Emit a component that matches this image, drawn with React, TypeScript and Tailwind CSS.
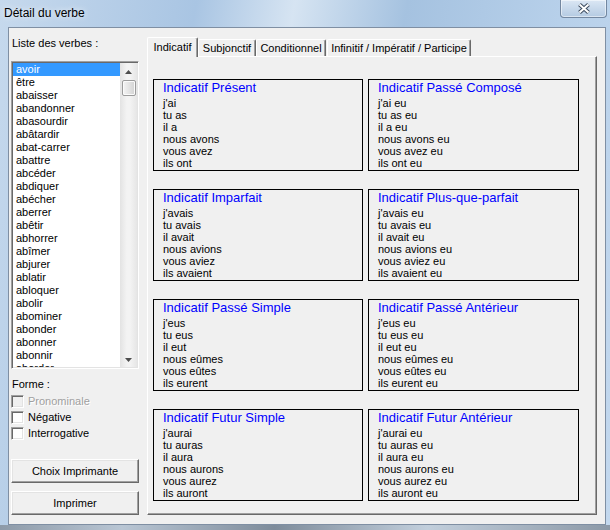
import React from 'react';

const verbs = [
  'avoir', 'être', 'abaisser', 'abandonner', 'abasourdir', 'abâtardir', 'abat-carrer', 'abattre',
  'abcéder', 'abdiquer', 'abécher', 'aberrer', 'abêtir', 'abhorrer', 'abîmer', 'abjurer',
  'ablatir', 'abloquer', 'abolir', 'abominer', 'abonder', 'abonner', 'abonnir', 'aborder',
];

const tenses = [
  { title: 'Indicatif Présent', lines: ["j'ai", 'tu as', 'il a', 'nous avons', 'vous avez', 'ils ont'] },
  { title: 'Indicatif Passé Composé', lines: ["j'ai eu", 'tu as eu', 'il a eu', 'nous avons eu', 'vous avez eu', 'ils ont eu'] },
  { title: 'Indicatif Imparfait', lines: ["j'avais", 'tu avais', 'il avait', 'nous avions', 'vous aviez', 'ils avaient'] },
  { title: 'Indicatif Plus-que-parfait', lines: ["j'avais eu", 'tu avais eu', 'il avait eu', 'nous avions eu', 'vous aviez eu', 'ils avaient eu'] },
  { title: 'Indicatif Passé Simple', lines: ["j'eus", 'tu eus', 'il eut', 'nous eûmes', 'vous eûtes', 'ils eurent'] },
  { title: 'Indicatif Passé Antérieur', lines: ["j'eus eu", 'tu eus eu', 'il eut eu', 'nous eûmes eu', 'vous eûtes eu', 'ils eurent eu'] },
  { title: 'Indicatif Futur Simple', lines: ["j'aurai", 'tu auras', 'il aura', 'nous aurons', 'vous aurez', 'ils auront'] },
  { title: 'Indicatif Futur Antérieur', lines: ["j'aurai eu", 'tu auras eu', 'il aura eu', 'nous aurons eu', 'vous aurez eu', 'ils auront eu'] },
];

const tabs = [
  { label: 'Indicatif', w: 'w-[51px]', active: true },
  { label: 'Subjonctif', w: 'w-[58px]' },
  { label: 'Conditionnel', w: 'w-[70px]' },
  { label: 'Infinitif / Impératif / Participe', w: 'w-[144px] ml-[1px]' },
];

function Checkbox({ label, disabled }: { label: string; disabled?: boolean }) {
  return (
    <div className="flex items-center h-[13px]">
      <div
        className={`w-[13px] h-[13px] border border-t-[#a0a0a0] border-l-[#a0a0a0] border-r-white border-b-white shadow-[inset_1px_1px_0_#696969,inset_-1px_-1px_0_#e3e3e3] ${disabled ? 'bg-[#f0f0f0]' : 'bg-white'}`}
      />
      <span
        className={`ml-[4px] text-[11px] leading-[13px] ${disabled ? 'text-[#a0a0a0] [text-shadow:1px_1px_0_#fff]' : 'text-black'}`}
      >
        {label}
      </span>
    </div>
  );
}

function Button({ label, className = '' }: { label: string; className?: string }) {
  return (
    <div
      className={`w-[128px] h-[24px] flex items-center justify-center bg-[#f0f0f0] border border-t-white border-l-white border-r-[#696969] border-b-[#696969] shadow-[inset_-1px_-1px_0_#a0a0a0,inset_1px_1px_0_#e3e3e3] text-[11px] text-black ${className}`}
    >
      {label}
    </div>
  );
}

function Arrow({ down }: { down?: boolean }) {
  return (
    <svg width="7" height="4" viewBox="0 0 7 4">
      {down ? (
        <path d="M0 0 H7 L3.5 4 Z" fill="#4d4d4d" />
      ) : (
        <path d="M0 4 H7 L3.5 0 Z" fill="#4d4d4d" />
      )}
    </svg>
  );
}

export default function App() {
  return (
    <div
      className="w-[610px] h-[530px] overflow-hidden flex flex-col bg-[linear-gradient(100deg,#c6d9ed_0%,#a9c5e3_28%,#d6e4f2_42%,#a5c2e0_58%,#b7d0ea_80%,#c3d8ee_100%)]"
      style={{ fontFamily: '"Liberation Sans", Arial, sans-serif' }}
    >
      {/* title bar */}
      <div className="h-[27px] flex justify-between shrink-0">
        <div className="pl-[4px] pt-[6px] text-[12px] leading-[15px] text-black [text-shadow:0_0_6px_#ffffff]">
          Détail du verbe
        </div>
        <div className="mr-[3px] w-[47px] h-[18px] rounded-b-[4px] border border-t-0 border-[#7387a0] bg-[linear-gradient(180deg,#dbe7f4,#b4cae2)] shadow-[inset_0_0_0_1px_rgba(255,255,255,0.5)] flex items-center justify-center">
          <svg width="14" height="11" viewBox="0 0 14 11">
            <path d="M2.5 1.5 L11.5 9.5 M11.5 1.5 L2.5 9.5" stroke="#3c4b5e" strokeWidth="4" />
            <path d="M2.5 1.5 L11.5 9.5 M11.5 1.5 L2.5 9.5" stroke="#ffffff" strokeWidth="2" />
          </svg>
        </div>
      </div>

      {/* client area */}
      <div className="ml-[8px] w-[598px] h-[498px] shrink-0 border border-[#7f8fa3] bg-[#f0f0f0] flex">
        {/* left column */}
        <div className="ml-[2px] w-[128px] flex flex-col">
          <div className="mt-[9px] pl-[1px] text-[11px] leading-[13px]">Liste des verbes :</div>

          <div className="mt-[11px] w-[128px] h-[308px] border border-t-[#a0a0a0] border-l-[#a0a0a0] border-r-white border-b-white shadow-[inset_1px_1px_0_#696969,inset_-1px_-1px_0_#e3e3e3] bg-white p-[1px] flex">
            <div className="w-[107px] h-full overflow-hidden">
              {verbs.map((v, i) => (
                <div
                  key={v}
                  className={`h-[13px] pl-[3px] text-[11px] leading-[13px] whitespace-nowrap ${i === 0 ? 'bg-[#3399ff] text-white' : 'text-black'}`}
                >
                  {v}
                </div>
              ))}
            </div>
            <div className="w-[17px] h-full flex flex-col bg-[linear-gradient(90deg,#e3e3e3,#f3f3f3_40%,#f3f3f3_60%,#e6e6e6)]">
              <div className="h-[17px] flex items-center justify-center">
                <Arrow />
              </div>
              <div className="ml-[2px] w-[14px] h-[16px] rounded-[2px] border border-[#9c9c9c] bg-[linear-gradient(90deg,#f4f4f4,#e4e4e4_50%,#d3d3d3)] shadow-[inset_0_0_0_1px_#fbfbfb]" />
              <div className="flex-1" />
              <div className="h-[15px] flex items-center justify-center">
                <Arrow down />
              </div>
            </div>
          </div>

          <div className="mt-[9px] pl-[1px] text-[11px] leading-[13px]">Forme :</div>
          <div className="mt-[4px] flex flex-col gap-[3px]">
            <Checkbox label="Pronominale" disabled />
            <Checkbox label="Négative" />
            <Checkbox label="Interrogative" />
          </div>

          <Button label="Choix Imprimante" className="mt-[19px]" />
          <Button label="Imprimer" className="mt-[8px]" />
        </div>

        {/* tab control */}
        <div className="ml-[8px] w-[450px] flex flex-col">
          <div className="mt-[9px] h-[19px] flex items-end">
            {tabs.map((t) => (
              <div
                key={t.label}
                className={`${t.w} ${t.active ? 'h-[20px] -mb-px relative z-10 pt-[3px]' : 'h-[17px] pt-[2px]'} bg-[#f0f0f0] border-l border-t border-r border-l-white border-t-white border-r-[#696969] rounded-tl-[2px] rounded-tr-[2px] shadow-[inset_-1px_0_0_#a0a0a0] text-center text-[11px] leading-[13px] whitespace-nowrap`}
              >
                {t.label}
              </div>
            ))}
          </div>

          <div className="w-[450px] h-[459px] border border-l-white border-t-white border-r-[#696969] border-b-[#696969] shadow-[inset_-1px_-1px_0_#a0a0a0] pl-[5px] pt-[22px]">
            <div className="grid grid-cols-[210px_211px] gap-x-[5px] gap-y-[18px]">
              {tenses.map((t) => (
                <div key={t.title} className="h-[92px] border border-black pl-[9px]">
                  <div className="text-[13px] leading-[15px] text-[#0000ff] whitespace-nowrap">{t.title}</div>
                  <div className="mt-[2px]">
                    {t.lines.map((l) => (
                      <div key={l} className="text-[11px] leading-[12px] text-black whitespace-nowrap">
                        {l}
                      </div>
                    ))}
                  </div>
                </div>
              ))}
            </div>
          </div>
        </div>
      </div>

      {/* bottom frame */}
      <div className="flex-1 bg-[linear-gradient(90deg,#8d9aa8,#b9c6d4_20%,#7e8c9b_45%,#c2cfdc_70%,#8c99a7)]" />
    </div>
  );
}
